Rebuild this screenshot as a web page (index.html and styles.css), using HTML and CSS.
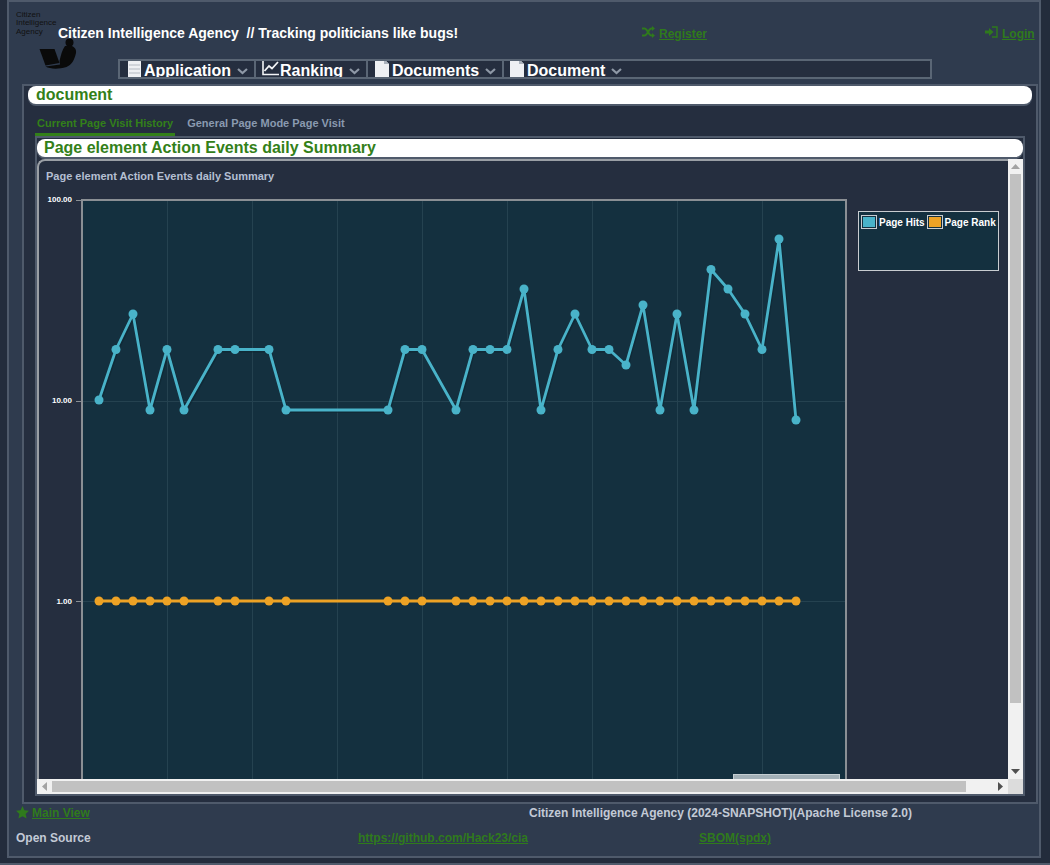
FILE: index.html
```html
<!DOCTYPE html>
<html lang="en">
<head>
    <meta charset="UTF-8">
    <title>Citizen Intelligence Agency</title>
    <link rel="stylesheet" href="styles.css">
</head>
<body>
    <div class="page">
        <div class="header">
            <div class="logo">
                <div class="logo-text">Citizen<br>Intelligence<br>Agency</div>
                <svg class="logo-pic" width="40" height="32" viewBox="38 38 40 32">
                    <circle cx="69.5" cy="42.5" r="4" fill="#0a0a0a"/>
                    <path d="M39.5 49 L54.5 49 L59.5 63 L45.5 65.5 Z" fill="#0a0a0a"/>
                    <path d="M65 46 C72 44 77 48 76 53 C74.5 60 71.5 65 66.5 67 C58 69.5 50 69 45.5 66.5 L60 64.5 L59.5 61 C61 55 62 50 65 46 Z" fill="#0a0a0a"/>
                </svg>
            </div>
            <div class="title">Citizen Intelligence Agency &nbsp;// Tracking politicians like bugs!</div>
            <a class="link register" href="#">
                <svg width="13" height="12" viewBox="0 0 13 12"><path d="M0 2.5 H2.5 C5.5 2.5 6.5 9.5 9.5 9.5 H10.5 M0 9.5 H2.5 C5.5 9.5 6.5 2.5 9.5 2.5 H10.5" fill="none" stroke="#2f7a1c" stroke-width="2"/><path d="M10 0 L13 2.5 L10 5 Z M10 7 L13 9.5 L10 12 Z" fill="#2f7a1c"/></svg>
                <span>Register</span>
            </a>
            <a class="link login" href="#">
                <svg width="13" height="12" viewBox="0 0 13 12"><path d="M0 4.5 H4 V2 L8.5 6 L4 10 V7.5 H0 Z" fill="#2f7a1c"/><path d="M7 1 H12 V11 H7" fill="none" stroke="#2f7a1c" stroke-width="1.4"/></svg>
                <span>Login</span>
            </a>
        </div>

        <div class="nav">
            <div class="nav-item item-app">
                <svg width="13" height="18" viewBox="0 0 13 18"><path d="M0 3 C0 1 2 0 6.5 0 C11 0 13 1 13 3 V18 H0 Z" fill="#eef0f3"/><path d="M1 6 H12 M1 10 H12 M1 14 H12" stroke="#b4bac2" stroke-width="1"/></svg>
                <span>Application</span>
                <svg class="chev" width="11" height="7" viewBox="0 0 11 7"><path d="M1 1 L5.5 5 L10 1" fill="none" stroke="#8e98a6" stroke-width="2.2"/></svg>
            </div>
            <div class="nav-item item-rank">
                <svg width="17" height="16" viewBox="0 0 17 16"><path d="M1 0 V14.5 H17" fill="none" stroke="#f2f4f6" stroke-width="1.6"/><path d="M2.5 11 L7 6 L10 8.5 L16 2" fill="none" stroke="#f2f4f6" stroke-width="1.8"/></svg>
                <span>Ranking</span>
                <svg class="chev" width="11" height="7" viewBox="0 0 11 7"><path d="M1 1 L5.5 5 L10 1" fill="none" stroke="#8e98a6" stroke-width="2.2"/></svg>
            </div>
            <div class="nav-item item-docs">
                <svg width="14" height="18" viewBox="0 0 14 18"><path d="M0 0 H9 L14 5 V18 H0 Z" fill="#eef0f3"/><path d="M9 0 V5 H14" fill="#aab2bc"/></svg>
                <span>Documents</span>
                <svg class="chev" width="11" height="7" viewBox="0 0 11 7"><path d="M1 1 L5.5 5 L10 1" fill="none" stroke="#8e98a6" stroke-width="2.2"/></svg>
            </div>
            <div class="nav-item item-doc">
                <svg width="14" height="18" viewBox="0 0 14 18"><path d="M0 0 H9 L14 5 V18 H0 Z" fill="#eef0f3"/><path d="M9 0 V5 H14" fill="#aab2bc"/></svg>
                <span>Document</span>
                <svg class="chev" width="11" height="7" viewBox="0 0 11 7"><path d="M1 1 L5.5 5 L10 1" fill="none" stroke="#8e98a6" stroke-width="2.2"/></svg>
            </div>
        </div>

        <div class="main">
            <div class="bar bar-doc">document</div>

            <div class="tabs">
                <div class="tab tab-active">Current Page Visit History</div>
                <div class="tab">General Page Mode Page Visit</div>
            </div>

            <div class="tabsheet">
                <div class="bar bar-title">Page element Action Events daily Summary</div>
                <div class="scroller">
                    <div class="view">
                        <div class="card">
                            <div class="card-title">Page element Action Events daily Summary</div>
                            <div class="chart-row">
                                <svg class="plot" width="810" height="660" viewBox="39 190 810 660">
                                    <defs>
                                        <marker id="dot-blue" markerUnits="userSpaceOnUse" markerWidth="10" markerHeight="10" refX="5" refY="5"><circle cx="5" cy="5" r="4.5" fill="#49b3c9"/></marker>
                                        <marker id="dot-orange" markerUnits="userSpaceOnUse" markerWidth="10" markerHeight="10" refX="5" refY="5"><circle cx="5" cy="5" r="4.5" fill="#eda225"/></marker>
                                    </defs>
                                    <rect class="plot-bg" x="83" y="201" width="762" height="640"/>
                                    <path class="grid" d="M167.5 201V850M252.5 201V850M337.5 201V850M422.5 201V850M507.5 201V850M592.5 201V850M677.5 201V850M762.5 201V850M83 401.5H845M83 601.5H845"/>
                                    <path class="tick" d="M76 200.5H82M76 401.5H82M76 601.5H82"/>
                                    <text class="axis" x="72" y="202">100.00</text>
                                    <text class="axis" x="72" y="403">10.00</text>
                                    <text class="axis" x="72" y="604">1.00</text>

                                    <polyline class="shadow" points="99,400 116,349.5 133,314 150,410 167,349.5 184,410 218,349.5 235,349.5 269,349.5 286,410 388,410 405,349.5 422,349.5 456,410 473,349.5 490,349.5 507,349.5 524,289 541,410 558,349.5 575,314 592,349.5 609,349.5 626,365 643,305 660,410 677,314 694,410 711,269.5 728,289 745,314 762,349.5 779,239 796,420" transform="translate(1 1.5)"/>
                                    <polyline class="line-blue" points="99,400 116,349.5 133,314 150,410 167,349.5 184,410 218,349.5 235,349.5 269,349.5 286,410 388,410 405,349.5 422,349.5 456,410 473,349.5 490,349.5 507,349.5 524,289 541,410 558,349.5 575,314 592,349.5 609,349.5 626,365 643,305 660,410 677,314 694,410 711,269.5 728,289 745,314 762,349.5 779,239 796,420"/>
                                    <polyline class="line-orange" points="99,601 116,601 133,601 150,601 167,601 184,601 218,601 235,601 269,601 286,601 388,601 405,601 422,601 456,601 473,601 490,601 507,601 524,601 541,601 558,601 575,601 592,601 609,601 626,601 643,601 660,601 677,601 694,601 711,601 728,601 745,601 762,601 779,601 796,601"/>

                                    <rect class="plot-frame" x="82" y="200" width="764" height="660"/>
                                    <rect class="overview" x="733.5" y="774.5" width="106" height="20"/>
                                </svg>
                                <div class="legend">
                                    <div class="legend-item"><span class="swatch swatch-blue"></span>Page Hits</div>
                                    <div class="legend-item"><span class="swatch swatch-orange"></span>Page Rank</div>
                                </div>
                            </div>
                        </div>
                    </div>

                    <div class="vbar">
                        <div class="sb-btn"><svg width="9" height="5" viewBox="0 0 9 5"><path d="M4.5 0 L9 5 H0 Z" fill="#a3a3a3"/></svg></div>
                        <div class="sb-thumb thumb-v"></div>
                        <div class="sb-fill"></div>
                        <div class="sb-btn"><svg width="9" height="5" viewBox="0 0 9 5"><path d="M0 0 H9 L4.5 5 Z" fill="#505050"/></svg></div>
                    </div>
                    <div class="hbar">
                        <div class="sb-btn"><svg width="5" height="9" viewBox="0 0 5 9"><path d="M5 0 V9 L0 4.5 Z" fill="#a3a3a3"/></svg></div>
                        <div class="sb-thumb thumb-h"></div>
                        <div class="sb-fill"></div>
                        <div class="sb-btn"><svg width="5" height="9" viewBox="0 0 5 9"><path d="M0 0 L5 4.5 L0 9 Z" fill="#505050"/></svg></div>
                    </div>
                    <div class="sb-corner"></div>
                </div>
            </div>
        </div>

        <div class="footer">
            <div class="footer-row row-top">
                <div class="footer-left">
                    <svg width="13" height="13" viewBox="0 0 13 13"><path d="M6.5 0 L8.4 4.3 L13 4.8 L9.6 7.9 L10.6 12.6 L6.5 10.2 L2.4 12.6 L3.4 7.9 L0 4.8 L4.6 4.3 Z" fill="#2f7a1c"/></svg>
                    <a class="link" href="#">Main View</a>
                </div>
                <div class="footer-text">Citizen Intelligence Agency (2024-SNAPSHOT)(Apache License 2.0)</div>
            </div>
            <div class="footer-row row-bottom">
                <div class="footer-text">Open Source</div>
                <a class="link" href="#">https://github.com/Hack23/cia</a>
                <a class="link" href="#">SBOM(spdx)</a>
            </div>
        </div>
    </div>
    <div class="page-end"></div>
</body>
</html>
```

FILE: styles.css
```css
* {
    margin: 0;
    padding: 0;
    box-sizing: border-box;
    font-family: "Liberation Sans", Arial, sans-serif;
}

html, body {
    height: 865px;
    overflow: hidden;
}

body {
    background-color: #232c3c;
}

.page {
    margin: 0 0 0 7px;
    width: 1034px;
    height: 858px;
    background-color: #2f3b4e;
    border: 2px solid #4f5a6b;
}

.page-end {
    margin-top: 5px;
    height: 2px;
    background-color: #4f5a6b;
}

/* header */

.header {
    display: flex;
    height: 57px;
}

.logo {
    width: 42px;
    margin-left: 7px;
    position: relative;
}

.logo-text {
    padding-top: 9px;
    color: #111;
    font-size: 8px;
    line-height: 8.3px;
}

.logo-pic {
    position: absolute;
    left: 22px;
    top: 36px;
}

.title {
    color: #fff;
    font-size: 14px;
    font-weight: bold;
    padding-top: 23px;
    width: 584px;
}

.link {
    color: #2f7a1c;
    font-size: 12px;
    font-weight: bold;
    text-decoration: underline;
}

.register, .login {
    padding-top: 24px;
    display: flex;
    align-items: flex-start;
    gap: 4px;
    height: 40px;
}

.register span, .login span {
    margin-top: 1px;
}

.register {
    width: 343px;
}

/* menu */

.nav {
    display: flex;
    margin-left: 109px;
    width: 814px;
    height: 20px;
    background-color: #252e3f;
    border: 2px solid #5a6675;
    overflow: hidden;
}

.nav-item {
    display: flex;
    align-items: center;
    color: #fff;
    font-size: 16px;
    font-weight: bold;
    height: 16px;
    padding-top: 3px;
    border-right: 2px solid #5a6675;
}

.nav-item > svg:first-child {
    margin-top: -6px;
    margin-right: 3px;
    flex-shrink: 0;
}

.nav-item .chev {
    margin-left: 6px;
    margin-top: 1px;
}

.item-app {
    width: 136px;
    padding-left: 8px;
}

.item-rank {
    width: 112px;
    padding-left: 6px;
}

.item-rank > svg:first-child {
    margin-right: 1px;
}

.item-docs {
    width: 136px;
    padding-left: 7px;
}

.item-doc {
    padding-left: 6px;
    border-right: none;
}

/* main area */

.main {
    margin: 5px 0 0 13px;
    width: 1016px;
    height: 720px;
    background-color: #252e3f;
    border: 2px solid #4f5a6b;
    padding-left: 4px;
}

.bar {
    background-color: #fff;
    color: #338019;
    font-weight: bold;
    font-size: 16px;
    border-radius: 8px;
    box-shadow: 0 2px 0 #4f5a6b;
}

.bar-doc {
    width: 1004px;
    height: 18px;
    line-height: 17px;
    padding-left: 8px;
}

.tabs {
    display: flex;
    margin: 11px 0 0 7px;
    height: 21px;
}

.tab {
    color: #8a9ab0;
    font-size: 11px;
    font-weight: bold;
    padding: 2px 6px 0 6px;
}

.tab-active {
    color: #338019;
    border-bottom: 3px solid #338019;
    padding-left: 2px;
    padding-right: 2px;
    margin-right: 6px;
}

.tabsheet {
    margin-left: 7px;
    width: 990px;
    height: 660px;
    border: 2px solid #4f5a6b;
}

.bar-title {
    margin-top: 1px;
    height: 18px;
    line-height: 17px;
    padding-left: 7px;
}

/* scroll panel: the bars are drawn, the window hides native ones */

.scroller {
    margin-top: 2px;
    height: 635px;
    display: grid;
    grid-template-columns: 1fr 15px;
    grid-template-rows: 620px 15px;
    background-color: #252e3f;
}

.view {
    overflow: hidden;
}

.vbar, .hbar {
    display: flex;
    background-color: #f1f1f1;
}

.vbar {
    flex-direction: column;
}

.sb-btn {
    display: flex;
    align-items: center;
    justify-content: center;
    width: 15px;
    height: 15px;
    flex-shrink: 0;
}

.sb-thumb {
    background-color: #c1c1c1;
}

.thumb-v {
    width: 11px;
    height: 529px;
    margin-left: 2px;
}

.thumb-h {
    width: 914px;
    height: 11px;
    margin-top: 2px;
}

.sb-fill {
    flex: 1;
}

.sb-corner {
    background-color: #dcdcdc;
}

/* chart */

.card {
    width: 1000px;
    height: 690px;
    background-color: #252e3f;
    border-top: 2px solid #9a9fa5;
    border-left: 2px solid #9a9fa5;
    border-top-left-radius: 8px;
}

.card-title {
    height: 29px;
    padding: 9px 0 0 7px;
    color: #b4bfd2;
    font-size: 11px;
    font-weight: bold;
}

.chart-row {
    display: flex;
    align-items: flex-start;
}

.plot {
    flex-shrink: 0;
    display: block;
}

.plot-bg {
    fill: #14303f;
}

.grid {
    fill: none;
    stroke: #254250;
    stroke-width: 1;
}

.tick {
    fill: none;
    stroke: #8a8f94;
    stroke-width: 1;
}

.axis {
    fill: #fff;
    font-size: 8px;
    font-weight: bold;
    text-anchor: end;
}

.shadow {
    fill: none;
    stroke: #0d2530;
    stroke-width: 3;
    opacity: 0.6;
}

.line-blue {
    fill: none;
    stroke: #49b3c9;
    stroke-width: 2.8;
    stroke-linejoin: round;
    marker-start: url(#dot-blue);
    marker-mid: url(#dot-blue);
    marker-end: url(#dot-blue);
}

.line-orange {
    fill: none;
    stroke: #eda225;
    stroke-width: 3;
    marker-start: url(#dot-orange);
    marker-mid: url(#dot-orange);
    marker-end: url(#dot-orange);
}

.plot-frame {
    fill: none;
    stroke: #8a8f94;
    stroke-width: 2;
}

.overview {
    fill: #a3b0b7;
    stroke: #c5ced2;
    stroke-width: 1;
}

.legend {
    display: flex;
    align-items: flex-start;
    flex-shrink: 0;
    width: 141px;
    height: 60px;
    margin: 21px 0 0 9px;
    padding: 3px 0 0 2px;
    background-color: #14303f;
    border: 1px solid #c8ccd0;
}

.legend-item {
    display: flex;
    align-items: center;
    color: #fff;
    font-size: 10px;
    font-weight: bold;
    white-space: nowrap;
    margin-right: 2px;
}

.swatch {
    width: 16px;
    height: 14px;
    border: 1px solid #c8ccd0;
    box-shadow: inset 0 0 0 1px #14303f;
    margin-right: 2px;
}

.swatch-blue {
    background-color: #49b3c9;
}

.swatch-orange {
    background-color: #eda225;
}

/* footer */

.footer {
    padding-left: 7px;
}

.footer-text {
    color: #c3cad6;
    font-size: 12px;
    font-weight: bold;
}

.footer-row {
    display: grid;
}

.row-top {
    grid-template-columns: 513px 1fr;
    padding-top: 2px;
    height: 27px;
}

.footer-left {
    display: flex;
    align-items: flex-start;
    gap: 3px;
}

.row-bottom {
    grid-template-columns: 342px 341px 1fr;
}
```
